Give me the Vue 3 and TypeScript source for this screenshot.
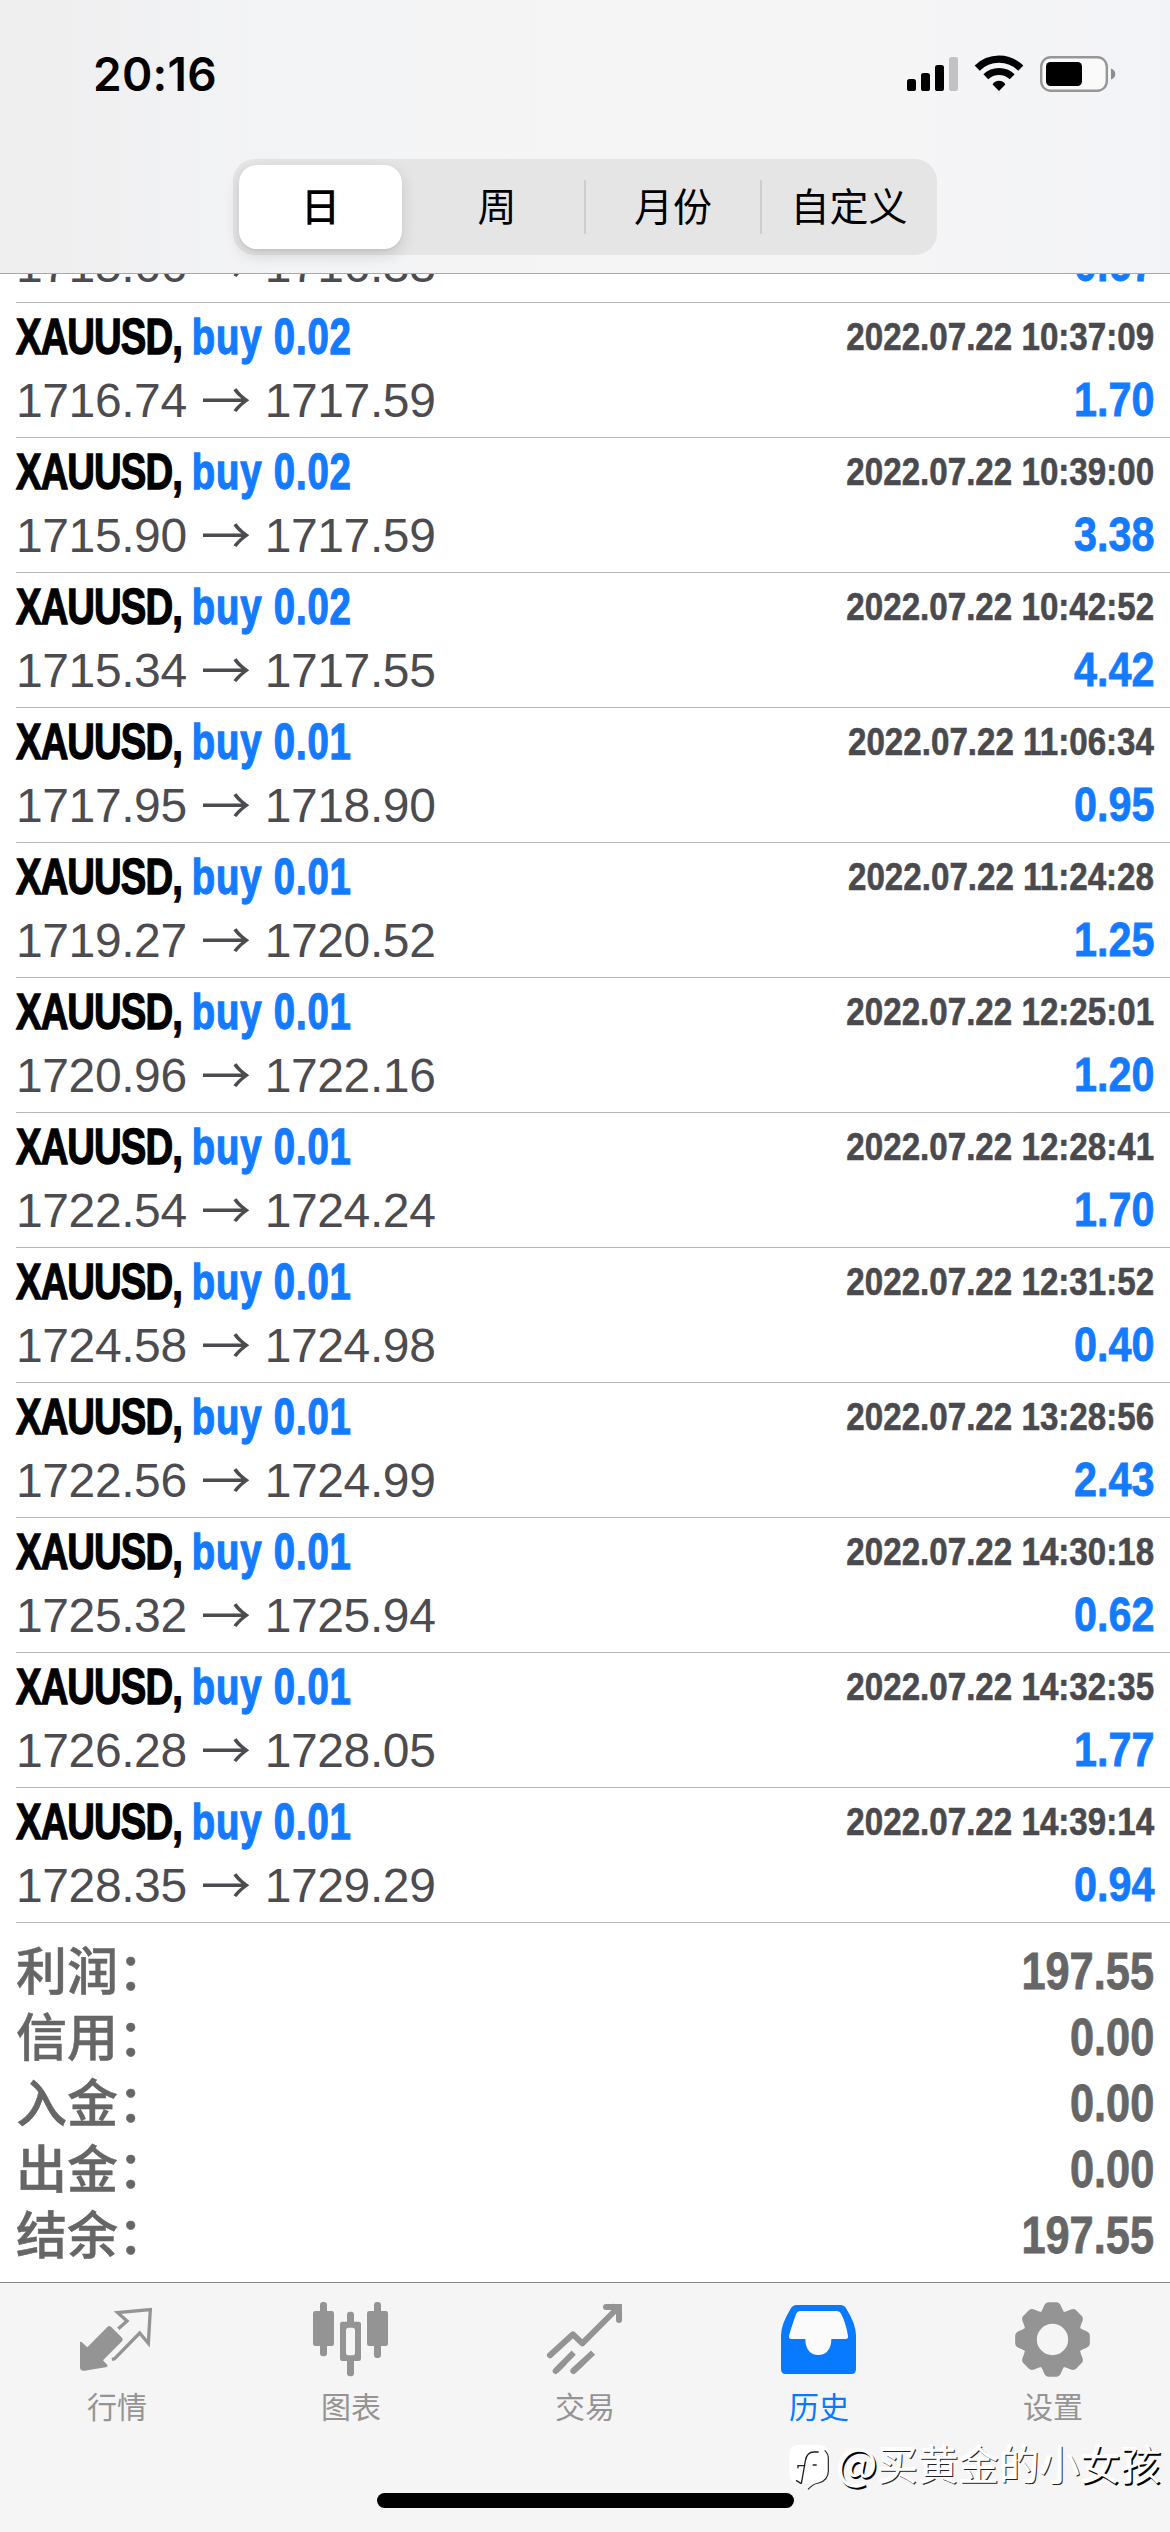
<script setup lang="ts">
interface Deal {
  lots: string
  open: string
  close: string
  time: string
  profit: string
}

const periods: string[] = ['日', '周', '月份', '自定义']

const deals: Deal[] = [
  { lots: '0.01', open: '1715.66', close: '1716.33', time: '2022.07.22 10:31:40', profit: '0.67' },
  { lots: '0.02', open: '1716.74', close: '1717.59', time: '2022.07.22 10:37:09', profit: '1.70' },
  { lots: '0.02', open: '1715.90', close: '1717.59', time: '2022.07.22 10:39:00', profit: '3.38' },
  { lots: '0.02', open: '1715.34', close: '1717.55', time: '2022.07.22 10:42:52', profit: '4.42' },
  { lots: '0.01', open: '1717.95', close: '1718.90', time: '2022.07.22 11:06:34', profit: '0.95' },
  { lots: '0.01', open: '1719.27', close: '1720.52', time: '2022.07.22 11:24:28', profit: '1.25' },
  { lots: '0.01', open: '1720.96', close: '1722.16', time: '2022.07.22 12:25:01', profit: '1.20' },
  { lots: '0.01', open: '1722.54', close: '1724.24', time: '2022.07.22 12:28:41', profit: '1.70' },
  { lots: '0.01', open: '1724.58', close: '1724.98', time: '2022.07.22 12:31:52', profit: '0.40' },
  { lots: '0.01', open: '1722.56', close: '1724.99', time: '2022.07.22 13:28:56', profit: '2.43' },
  { lots: '0.01', open: '1725.32', close: '1725.94', time: '2022.07.22 14:30:18', profit: '0.62' },
  { lots: '0.01', open: '1726.28', close: '1728.05', time: '2022.07.22 14:32:35', profit: '1.77' },
  { lots: '0.01', open: '1728.35', close: '1729.29', time: '2022.07.22 14:39:14', profit: '0.94' },
]

const totals = [
  { label: '利润：', value: '197.55' },
  { label: '信用：', value: '0.00' },
  { label: '入金：', value: '0.00' },
  { label: '出金：', value: '0.00' },
  { label: '结余：', value: '197.55' },
]

const teeth = [0, 45, 90, 135, 180, 225, 270, 315]
</script>

<template>
  <div class="screen">
    <header class="header">
      <div class="status">
        <span class="clock">20:16</span>
        <svg class="status-icons" width="214" height="40" viewBox="904 54 214 40">
          <rect x="907" y="79" width="9" height="12" rx="2.6" />
          <rect x="921" y="73" width="9" height="18" rx="2.6" />
          <rect x="935" y="65" width="9" height="26" rx="2.6" />
          <rect x="949" y="57" width="9" height="34" rx="2.6" fill="#c2c2c2" />
          <g fill="none" stroke="#000">
            <path d="M977.2 68.1A31 31 0 0 1 1020.8 68.1" stroke-width="7.2" />
            <path d="M985.8 76.8A19 19 0 0 1 1012.2 76.8" stroke-width="7" />
          </g>
          <path d="M999 91L992.6 84.4Q994.5 80.8 999 80.8T1005.4 84.4Z" />
          <rect x="1041.2" y="57.2" width="65.6" height="33.6" rx="9.5" fill="#fafafa" stroke="#969696" stroke-width="2.4" />
          <rect x="1046" y="62" width="36" height="24" rx="4.5" />
          <path d="M1111 68.5Q1115.3 70 1115.3 74T1111 79.5Z" fill="#8c8c8c" />
        </svg>
      </div>
      <nav class="segments">
        <button v-for="(p, i) in periods" :key="p" class="segment" :class="{ active: i === 0, split: i > 1 }">{{ p }}</button>
      </nav>
    </header>

    <main class="history">
      <article v-for="d in deals" :key="d.time" class="deal">
        <div class="line">
          <span class="title"><span class="symbol">XAUUSD, </span><span class="side">buy {{ d.lots }}</span></span>
          <span class="time">{{ d.time }}</span>
        </div>
        <div class="line">
          <span class="prices">{{ d.open }}<span class="arrow">→</span>{{ d.close }}</span>
          <span class="profit">{{ d.profit }}</span>
        </div>
      </article>
      <section class="totals">
        <div v-for="t in totals" :key="t.label" class="total">
          <span class="total-label">{{ t.label }}</span>
          <span class="total-value">{{ t.value }}</span>
        </div>
      </section>
    </main>

    <footer class="tabbar">
      <div class="tabs">
        <div class="tab">
          <svg class="icon" viewBox="234 117 234 240">
            <path d="M240 246Q244 244 248 249L262 262L322 201Q327 195 333 200L366 233Q371 239 366 244L309 301L322 315Q324 321 317 322L254 332Q240 334 240 322Z" fill="currentColor" />
            <path d="M355 206L381 183L353 158L451 149L445 250L419 219L344 296L336 299" fill="none" stroke="currentColor" stroke-width="10" />
          </svg>
          <span>行情</span>
        </div>
        <div class="tab">
          <svg class="icon" viewBox="936 117 234 240" fill="currentColor">
            <rect x="960" y="126" width="21" height="163" rx="9" />
            <rect x="939" y="153" width="63" height="105" rx="7" />
            <rect x="1122" y="126" width="21" height="168" rx="9" />
            <rect x="1101" y="153" width="63" height="105" rx="7" />
            <rect x="1041" y="155" width="21" height="40" rx="9" />
            <rect x="1041" y="290" width="21" height="59" rx="9" />
            <path fill-rule="evenodd" d="M1027 185H1076Q1083 185 1083 192V296Q1083 303 1076 303H1027Q1020 303 1020 296V192Q1020 185 1027 185ZM1046 203Q1038 203 1038 211V278Q1038 286 1046 286H1057Q1065 286 1065 278V211Q1065 203 1057 203Z" />
          </svg>
          <span>图表</span>
        </div>
        <div class="tab">
          <svg class="icon" viewBox="288 117 234 240" fill="none" stroke="currentColor" stroke-width="18" stroke-linecap="round">
            <path d="M300 286L369 223L397 250L500 147" stroke-linejoin="round" />
            <path d="M468 141H507V180" />
            <path d="M490 141L507 158" />
            <path d="M317 333L371 278M370 333L429 278" stroke-linecap="butt" />
            <path d="M317 333L340 310M370 333L395 310" />
          </svg>
          <span>交易</span>
        </div>
        <div class="tab selected">
          <svg class="icon" viewBox="120 117 234 240">
            <path fill="currentColor" d="M170 135H301Q313 135 319 146Q348 193 348 225V328Q348 342 334 342H137Q123 342 123 328V225Q123 193 152 146Q158 135 170 135Z" />
            <path fill="#fbfbfb" d="M182 153H289Q299 153 304 163Q317 188 324 228Q325 237 317 237H274C274 268 259 285 235 285S196 268 196 237H154Q146 237 147 228Q154 202 168 163Q172 153 182 153Z" />
          </svg>
          <span>历史</span>
        </div>
        <div class="tab">
          <svg class="icon" viewBox="822 117 234 240">
            <g transform="translate(937.500 238.500)">
              <circle r="67" fill="none" stroke="currentColor" stroke-width="40" />
              <path
                v-for="a in teeth"
                :key="a"
                :transform="`rotate(${a})`"
                d="M-12 -105H12Q16 -105 19 -98Q23 -87 30 -76H-30Q-23 -87 -19 -98Q-16 -105 -12 -105Z"
                fill="currentColor"
                stroke="currentColor"
                stroke-width="14"
                stroke-linejoin="round"
              />
            </g>
          </svg>
          <span>设置</span>
        </div>
      </div>
      <div class="home-indicator"></div>
      <div class="watermark">
        <svg width="42" height="48" viewBox="0 0 126 144">
          <path d="M28 6H92Q122 6 122 42V82Q122 112 92 120Q76 124 62 140Q66 124 60 120H34Q4 120 4 92V38Q4 6 28 6Z" fill="#fff" />
          <path d="M110 22Q122 32 121 50V84Q121 112 92 120Q76 122 60 139" fill="none" stroke="#222" stroke-width="3.500" />
          <path d="M40 122L52 54Q56 27 78 27H92M30 76V68H52M74 66H86M24 112L40 122" fill="none" stroke="#222" stroke-width="4" />
        </svg>
        <span><span class="at">@</span>买黄金的小<span class="strong">女孩</span></span>
      </div>
    </footer>
  </div>
</template>

<style>
body {
  background: #fff;
}
</style>

<style scoped>
.screen {
  display: flex;
  flex-direction: column;
  width: 1170px;
  height: 2532px;
  overflow: hidden;
  background: #fff;
  font-family: 'Liberation Sans', 'Noto Sans CJK SC', sans-serif;
}

.header {
  box-sizing: border-box;
  flex: none;
  height: 274px;
  border-bottom: 1px solid #a9a9ab;
  background: linear-gradient(90deg, #efeff0 4%, #f3f4f6 25%, #f5f5f5 50%, #f5f5f6 78%, #f2f3f6);
}

.status {
  display: flex;
  justify-content: space-between;
  align-items: center;
  height: 148px;
  padding: 0 52px 0 93px;
}

.clock {
  font: 600 46px/48px Inter, sans-serif;
  letter-spacing: 0.3px;
}

.segments {
  display: flex;
  box-sizing: border-box;
  width: 704px;
  height: 96px;
  margin: 11px auto 0;
  border-radius: 22px;
  background: #e5e5e6;
}

.segment {
  position: relative;
  flex: 1;
  padding: 0 0 5px;
  border: 0;
  background: none;
  color: #000;
  font: 400 39px/91px 'Noto Sans CJK SC', sans-serif;
}

.segment.active {
  flex: none;
  width: 163px;
  height: 84px;
  margin: 6px 7px 6px 6px;
  border-radius: 18px;
  background: #fff;
  box-shadow: 0 6px 16px rgba(0, 0, 0, 0.14), 0 2px 2px rgba(0, 0, 0, 0.04);
  font-weight: 500;
  line-height: 79px;
}

.segment.split::before {
  content: '';
  position: absolute;
  left: -1px;
  top: 21px;
  width: 2px;
  height: 54px;
  background: #cdcdcf;
}

.history {
  flex: none;
  height: 2008px;
  overflow: hidden;
}

.deal {
  box-sizing: border-box;
  height: 135px;
  margin-left: 16px;
  padding: 9px 16px 0 0;
  border-bottom: 1px solid #b8b8bb;
}

.deal:first-child {
  margin-top: -106px;
}

.line {
  display: flex;
  justify-content: space-between;
  height: 63px;
  line-height: 50px;
  white-space: pre;
}

.title {
  font-size: 50px;
  font-weight: 700;
  transform: scaleX(0.766);
  transform-origin: 0 0;
}

.symbol {
  letter-spacing: -1.2px;
  -webkit-text-stroke: 1.3px #000;
}

.side {
  color: #147aff;
  letter-spacing: 1.1px;
  -webkit-text-stroke: 1.3px #147aff;
}

.time {
  color: #4a4a4e;
  font-size: 39px;
  font-weight: 700;
  transform: scaleX(0.85);
  transform-origin: 100% 0;
  -webkit-text-stroke: 0.6px #4a4a4e;
}

.prices {
  color: #4c4c50;
  font-size: 48px;
  letter-spacing: -0.4px;
}

.arrow {
  display: inline-block;
  position: relative;
  top: 2px;
  width: 78px;
  font-family: 'Noto Sans CJK SC', sans-serif;
  font-size: 50px;
  line-height: 40px;
  text-align: center;
}

.profit {
  color: #147aff;
  font-size: 48px;
  font-weight: 700;
  transform: scaleX(0.86);
  transform-origin: 100% 0;
  -webkit-text-stroke: 0.8px #147aff;
}

.totals {
  padding: 16px 16px 0;
}

.total {
  display: flex;
  justify-content: space-between;
  height: 66px;
  color: #666;
  font-weight: 700;
  line-height: 66px;
}

.total-label {
  margin-top: -4px;
  font-family: 'Noto Sans CJK SC', sans-serif;
  font-size: 51px;
  font-weight: 500;
  -webkit-text-stroke: 0.5px #666;
}

.total-value {
  font-size: 51px;
  transform: scaleX(0.85);
  transform-origin: 100% 0;
  -webkit-text-stroke: 0.8px #666;
}

.tabbar {
  position: relative;
  box-sizing: border-box;
  flex: 1;
  border-top: 1px solid #88888a;
  background: #f5f5f5;
}

.tabs {
  display: flex;
  padding-top: 16px;
}

.tab {
  display: flex;
  flex: 1;
  flex-direction: column;
  align-items: center;
  color: #949494;
  font: 400 30px/44px 'Noto Sans CJK SC', sans-serif;
}

.tab.selected {
  color: #087aff;
}

.icon {
  width: 78px;
  height: 80px;
  margin-bottom: 4px;
}

.home-indicator {
  position: absolute;
  left: 377px;
  top: 210px;
  width: 417px;
  height: 15px;
  border-radius: 8px;
  background: #000;
}

.watermark {
  position: absolute;
  right: 9px;
  top: 152px;
  display: flex;
  align-items: center;
  gap: 5px;
  color: #fff;
  font: 400 40.500px/48px 'Noto Sans CJK SC', sans-serif;
  text-shadow: 1px 1px 0 #222, -1px -1px 0 #fff;
  white-space: nowrap;
}

.watermark svg {
  margin: 8px 2px 0 0;
}

.at {
  font-size: 43px;
  line-height: 40px;
}

.at,
.strong {
  text-shadow: 1.5px 1.5px 0 #000, -1px -1px 0 #fff;
}
</style>
